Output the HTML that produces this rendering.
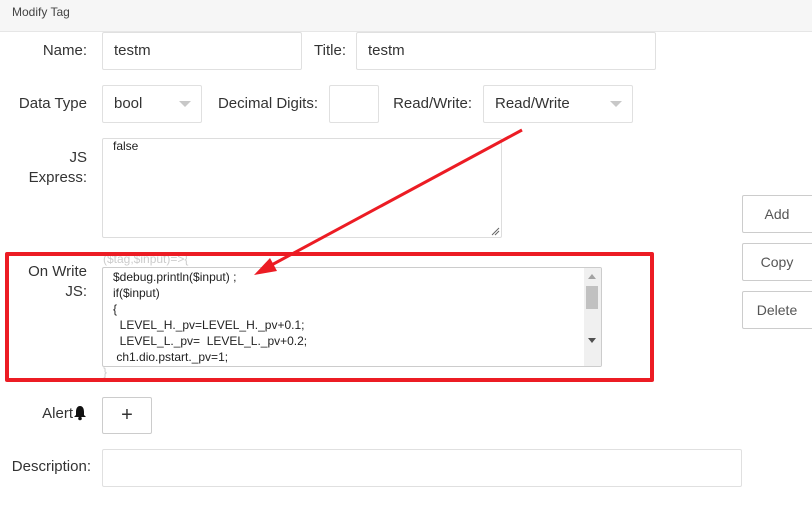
<!DOCTYPE html>
<html><head><style>
body{margin:0;width:812px;height:513px;background:#fff;font-family:"Liberation Sans",sans-serif;position:relative;overflow:hidden;color:#333}
.a{position:absolute}
.lbl{position:absolute;font-size:15px;color:#333;text-align:right}
.box{position:absolute;border:1px solid #e0e0e0;border-radius:2px;box-sizing:border-box;background:#fff;font-size:15px;color:#333}
.tri{position:absolute;width:0;height:0;border-left:6px solid transparent;border-right:6px solid transparent;border-top:6px solid #c8c8c8}
.btn{position:absolute;border:1px solid #ccc;border-radius:2px;box-sizing:border-box;font-size:14px;color:#555;text-align:center}
.code{position:absolute;font-size:12px;color:#222;line-height:16px;white-space:pre}
</style></head><body>
<div class="a" style="left:0;top:0;width:812px;height:31px;background:#f6f6f6;border-bottom:1px solid #e6e6e6"></div>
<div class="a" style="left:12px;top:5px;font-size:12px;color:#444">Modify Tag</div>

<div class="lbl" style="left:0;width:87px;top:42px">Name:</div>
<div class="box" style="left:102px;top:32px;width:200px;height:38px;padding:9px 11px">testm</div>
<div class="lbl" style="left:300px;width:46px;top:42px">Title:</div>
<div class="box" style="left:356px;top:32px;width:300px;height:38px;padding:9px 11px">testm</div>

<div class="lbl" style="left:0;width:87px;top:95px">Data Type</div>
<div class="box" style="left:102px;top:85px;width:100px;height:38px;padding:9px 11px">bool</div>
<div class="tri" style="left:179px;top:101px"></div>
<div class="lbl" style="left:200px;width:118px;top:95px">Decimal Digits:</div>
<div class="box" style="left:329px;top:85px;width:50px;height:38px"></div>
<div class="lbl" style="left:380px;width:92px;top:95px">Read/Write:</div>
<div class="box" style="left:483px;top:85px;width:150px;height:38px;padding:9px 11px">Read/Write</div>
<div class="tri" style="left:610px;top:101px"></div>

<div class="lbl" style="left:0;width:87px;top:148px;line-height:20px">JS<br>Express:</div>
<div class="box" style="left:102px;top:138px;width:400px;height:100px;border-color:#ddd"></div>
<div class="code" style="left:113px;top:138px">false</div>
<svg class="a" style="left:490px;top:226px" width="10" height="10"><path d="M2 9L9 2M5 9L9 5" stroke="#666" stroke-width="1"/></svg>

<div class="btn" style="left:742px;top:195px;width:80px;height:38px;line-height:36px;padding-right:10px">Add</div>
<div class="btn" style="left:742px;top:243px;width:80px;height:38px;line-height:36px;padding-right:10px">Copy</div>
<div class="btn" style="left:742px;top:291px;width:80px;height:38px;line-height:36px;padding-right:10px">Delete</div>

<div class="lbl" style="left:0;width:87px;top:262px;line-height:20px">On Write<br>JS:</div>
<div class="code" style="left:103px;top:251px;color:#ccc">($tag,$input)=&gt;{</div>
<div class="box" style="left:102px;top:267px;width:500px;height:100px;border-color:#ccc;overflow:hidden">
<div class="code" style="left:10px;top:1px">$debug.println($input) ;
if($input)
{
  LEVEL_H._pv=LEVEL_H._pv+0.1;
  LEVEL_L._pv=  LEVEL_L._pv+0.2;
 ch1.dio.pstart._pv=1;
}</div>
<div class="a" style="right:0;top:0;width:17px;height:98px;background:#f0f0f0"></div>
<div class="a" style="right:3px;top:18px;width:12px;height:23px;background:#c1c1c1"></div>
<div class="a" style="right:5px;top:6px;border-left:4px solid transparent;border-right:4px solid transparent;border-bottom:5px solid #a3a3a3"></div>
<div class="a" style="right:5px;top:70px;border-left:4px solid transparent;border-right:4px solid transparent;border-top:5px solid #505050"></div>
</div>
<div class="code" style="left:103px;top:364px;color:#ccc">}</div>

<div class="a" style="left:5px;top:252px;width:641px;height:122px;border:4px solid #ec1c24;border-radius:2px"></div>
<svg class="a" style="left:0;top:0" width="812" height="513">
<line x1="522" y1="130" x2="266" y2="268" stroke="#ec1c24" stroke-width="3"/>
<polygon points="254,275 270,258 277,271" fill="#ec1c24"/>
</svg>

<div class="lbl" style="left:0;width:73px;top:405px">Alert</div>
<svg class="a" style="left:72px;top:405px" width="16" height="16"><path d="M8 1C5 1 4 4 4 7V10L2 12H14L12 10V7C12 4 11 1 8 1Z" fill="#111"/><circle cx="8" cy="13.5" r="1.8" fill="#111"/></svg>
<div class="btn" style="left:102px;top:397px;width:50px;height:37px;line-height:34px;font-size:20px;color:#333">+</div>

<div class="lbl" style="left:0;width:91px;top:458px">Description:</div>
<div class="box" style="left:102px;top:449px;width:640px;height:38px"></div>
</body></html>
